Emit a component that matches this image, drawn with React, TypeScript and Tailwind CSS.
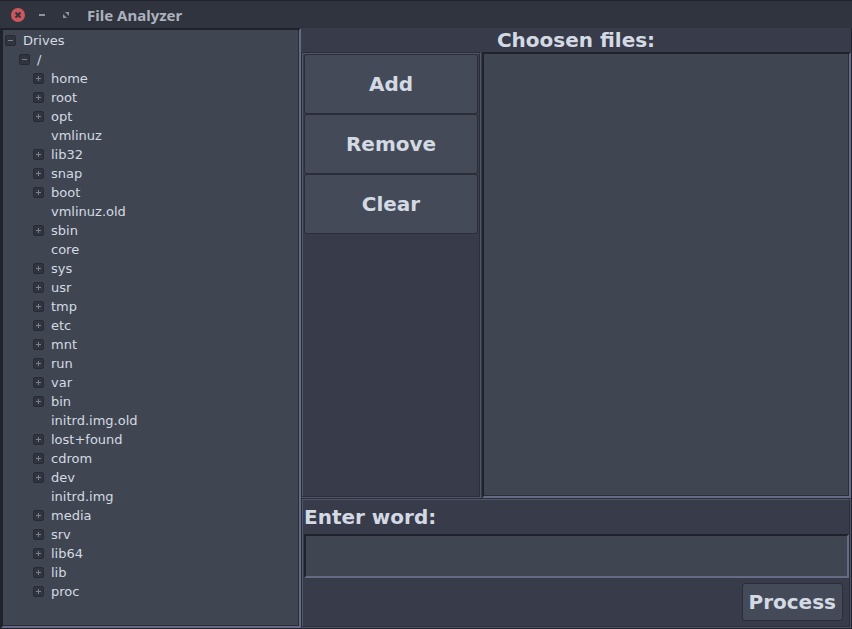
import { useState } from 'react';
import type { ReactNode } from 'react';

type Entry = { name: string; folder: boolean };

const files = ['vmlinuz', 'vmlinuz.old', 'core', 'initrd.img.old', 'initrd.img'];

const entries: Entry[] = [
  'home', 'root', 'opt', 'vmlinuz', 'lib32', 'snap', 'boot', 'vmlinuz.old', 'sbin',
  'core', 'sys', 'usr', 'tmp', 'etc', 'mnt', 'run', 'var', 'bin', 'initrd.img.old',
  'lost+found', 'cdrom', 'dev', 'initrd.img', 'media', 'srv', 'lib64', 'lib', 'proc',
].map((name) => ({ name, folder: !files.includes(name) }));

const sunken =
  'border-2 border-t-[#20222b] border-l-[#20222b] border-r-[#666b85] border-b-[#666b85] bg-[#404651]';

const innerEdge = 'shadow-[inset_-1px_-1px_0_#2b2d39]';

// Etched frame: dark line outside and light line inside at the top left, reversed at the bottom right.
const groove =
  'border border-t-[#2b2d39] border-l-[#2b2d39] border-r-[#505569] border-b-[#505569]';
const grooveInner =
  'border border-t-[#505569] border-l-[#505569] border-r-[#2b2d39] border-b-[#2b2d39]';

function Expander({ open, label, onClick }: { open: boolean; label: string; onClick?: () => void }) {
  return (
    <button
      type="button"
      aria-label={label}
      aria-expanded={open}
      onClick={onClick}
      className="flex size-[11px] shrink-0 items-center justify-center rounded-[2px] border border-[#282b35] bg-[#30343f]"
    >
      <svg viewBox="0 0 5 5" className="size-[5px]" shapeRendering="crispEdges" fill="#7b808b">
        <rect x="0" y="2" width="5" height="1" />
        {!open && <rect x="2" y="0" width="1" height="5" />}
      </svg>
    </button>
  );
}

function Row({ indent, children }: { indent: string; children: ReactNode }) {
  return <div className={`flex h-[19px] items-center gap-[7px] ${indent}`}>{children}</div>;
}

function TitleBar() {
  return (
    <header className="flex h-7 shrink-0 items-center border-t border-[#20232b] bg-[#2f343f] pl-[11px]">
      <button type="button" aria-label="Close" className="mr-3">
        <svg viewBox="0 0 14 14" className="size-3.5">
          <circle cx="7" cy="7" r="7" fill="#cc575d" />
          <path d="M4.5 4.5l5 5M9.5 4.5l-5 5" stroke="#2f343f" strokeWidth="2" />
        </svg>
      </button>
      <button type="button" aria-label="Minimize" className="mr-3.5">
        <svg viewBox="0 0 10 10" className="size-2.5">
          <rect x="2" y="4" width="6" height="2" fill="#8f939d" />
        </svg>
      </button>
      <button type="button" aria-label="Maximize" className="mr-4">
        <svg viewBox="0 0 10 10" className="size-2.5" fill="#8f939d">
          <path d="M4 2h4v4zM2 4v4h4z" />
        </svg>
      </button>
      <h1 className="font-['Noto_Sans',sans-serif] text-[15px] leading-5 font-bold text-[#adb1bc]">
        File Analyzer
      </h1>
    </header>
  );
}

function ActionButton({ children, onClick }: { children: ReactNode; onClick?: () => void }) {
  return (
    <button
      type="button"
      onClick={onClick}
      className="h-[60px] w-full rounded-[3px] border border-[#2b2d39] bg-[#444a58]"
    >
      {children}
    </button>
  );
}

export default function App() {
  const [drivesOpen, setDrivesOpen] = useState(true);
  const [rootOpen, setRootOpen] = useState(true);

  return (
    <div className="flex h-screen flex-col bg-[#383b4a] font-['DejaVu_Sans',sans-serif] text-[#d3dae3]">
      <TitleBar />
      <main className="flex min-h-0 flex-1 border-x border-b border-[#20232b]">
        <nav
          aria-label="Drives"
          className={`w-[300px] shrink-0 overflow-hidden pt-px text-[13px] ${sunken} ${innerEdge}`}
        >
          <Row indent="pl-[2px]">
            <Expander open={drivesOpen} label="Toggle Drives" onClick={() => setDrivesOpen(!drivesOpen)} />
            <span>Drives</span>
          </Row>
          {drivesOpen && (
            <Row indent="pl-4">
              <Expander open={rootOpen} label="Toggle /" onClick={() => setRootOpen(!rootOpen)} />
              <span>/</span>
            </Row>
          )}
          {drivesOpen && rootOpen && (
            <ul>
              {entries.map(({ name, folder }) => (
                <li key={name}>
                  <Row indent={folder ? 'pl-[30px]' : 'pl-12'}>
                    {folder && <Expander open={false} label={`Toggle ${name}`} />}
                    <span>{name}</span>
                  </Row>
                </li>
              ))}
            </ul>
          )}
        </nav>

        <div className="flex min-w-0 flex-1 flex-col text-xl font-bold">
          <div className="flex min-h-0 flex-1 flex-col">
            <h2 id="chosen" className="h-6 shrink-0 text-center leading-6">
              Choosen files:
            </h2>
            <div className="flex min-h-0 flex-1 gap-px">
              <div className={`w-[180px] shrink-0 ${groove}`}>
                <div className={`h-full px-px ${grooveInner}`}>
                  <ActionButton>Add</ActionButton>
                  <ActionButton>Remove</ActionButton>
                  <ActionButton>Clear</ActionButton>
                </div>
              </div>
              <ul aria-labelledby="chosen" className={`min-w-0 flex-1 ${sunken} ${innerEdge}`} />
            </div>
          </div>

          <form className={`shrink-0 ${groove}`} onSubmit={(e) => e.preventDefault()}>
            <div className={`pl-px ${grooveInner}`}>
              <label htmlFor="word" className="block h-[34px] leading-[34px]">
                Enter word:
              </label>
              <input id="word" type="text" className={`block h-11 w-full px-1 outline-none ${sunken}`} />
              <div className="flex justify-end pt-[5px] pr-1.5 pb-[5px]">
                <button
                  type="submit"
                  className="h-[38px] rounded-[3px] border border-[#2b2d39] bg-[#444a58] px-1.5"
                >
                  Process
                </button>
              </div>
            </div>
          </form>
        </div>
      </main>
    </div>
  );
}
